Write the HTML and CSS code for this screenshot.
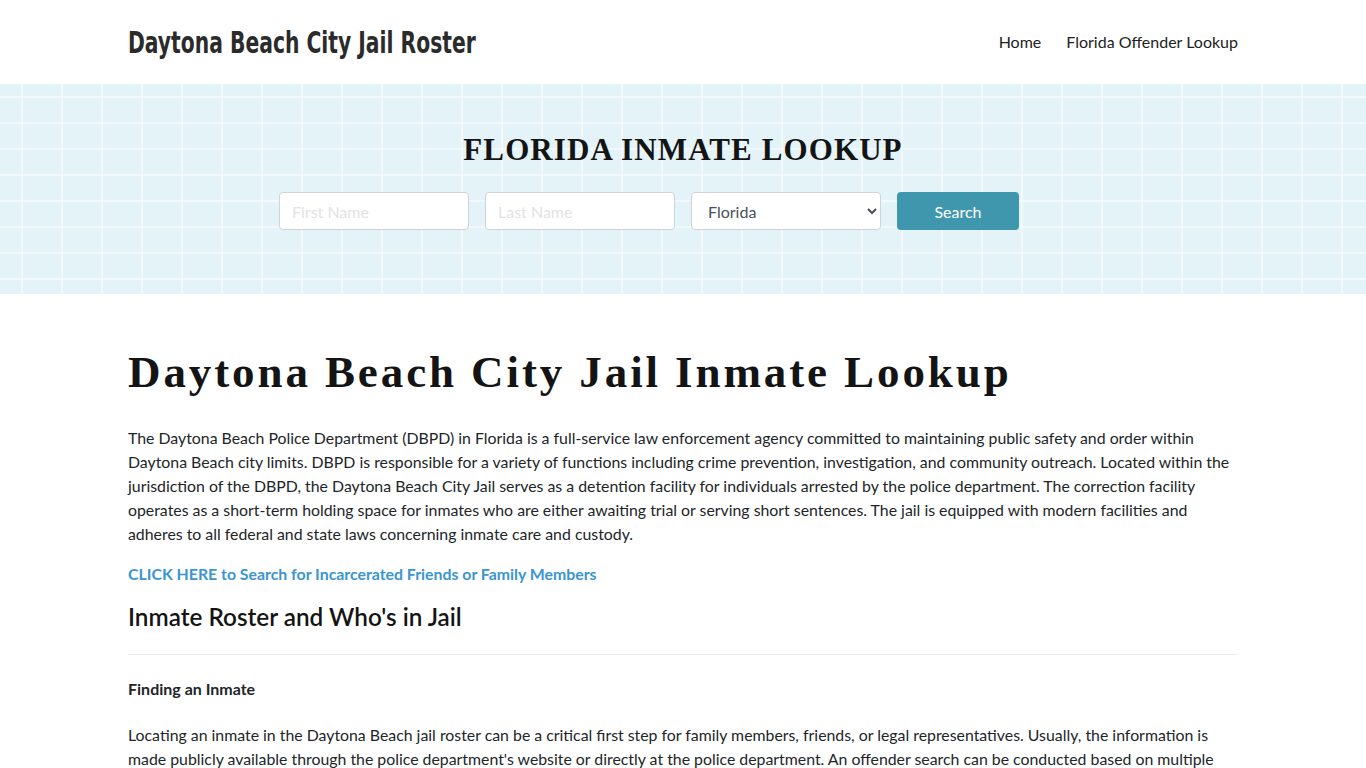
FILE: index.html
```html
<!DOCTYPE html>
<html lang="en">
<head>
<meta charset="utf-8">
<title>Daytona Beach City Jail Roster</title>
<link rel="stylesheet" href="styles.css">
</head>
<body>
<header class="site-header">
  <div class="container header-row">
    <a class="logo" href="#"><span class="logo-text">Daytona Beach City Jail Roster</span></a>
    <nav class="nav">
      <a href="#">Home</a>
      <a href="#">Florida Offender Lookup</a>
    </nav>
  </div>
</header>
<section class="hero">
  <h2 class="hero-title">FLORIDA INMATE LOOKUP</h2>
  <form class="search-form">
    <input class="field" type="text" placeholder="First Name">
    <input class="field" type="text" placeholder="Last Name">
    <select class="field select">
      <option>Florida</option>
    </select>
    <button class="btn" type="button">Search</button>
  </form>
</section>
<main class="container content">
  <h1 class="page-title">Daytona Beach City Jail Inmate Lookup</h1>
  <p>The Daytona Beach Police Department (DBPD) in Florida is a full-service law enforcement agency committed to maintaining public safety and order within Daytona Beach city limits. DBPD is responsible for a variety of functions including crime prevention, investigation, and community outreach. Located within the jurisdiction of the DBPD, the Daytona Beach City Jail serves as a detention facility for individuals arrested by the police department. The correction facility operates as a short-term holding space for inmates who are either awaiting trial or serving short sentences. The jail is equipped with modern facilities and adheres to all federal and state laws concerning inmate care and custody.</p>
  <p><a class="cta" href="#">CLICK HERE to Search for Incarcerated Friends or Family Members</a></p>
  <h2 class="section-title">Inmate Roster and Who's in Jail</h2>
  <hr class="divider">
  <h3 class="sub-title">Finding an Inmate</h3>
  <p>Locating an inmate in the Daytona Beach jail roster can be a critical first step for family members, friends, or legal representatives. Usually, the information is made publicly available through the police department's website or directly at the police department. An offender search can be conducted based on multiple criteria, such as the inmate's name, booking number, or date of arrest.</p>
</main>
</body>
</html>
```
FILE: styles.css
```css
* { box-sizing: border-box; }
html, body { margin: 0; padding: 0; }
body {
  font-family: Lato, "Open Sans", "Liberation Sans", sans-serif;
  font-size: 15.85px;
  line-height: 24px;
  color: #212529;
  background: #fff;
}
.container {
  width: 1110px;
  margin: 0 auto;
}
.site-header { height: 84px; }
.header-row {
  height: 84px;
  display: flex;
  align-items: center;
  justify-content: space-between;
}
.logo {
  display: block;
  width: 348px;
  height: 36px;
  margin-top: 2px;
  text-decoration: none;
  white-space: nowrap;
}
.logo-text {
  display: inline-block;
  font-family: "DejaVu Sans Condensed", "DejaVu Sans", sans-serif;
  font-weight: 700;
  font-size: 29.5px;
  line-height: 36px;
  color: #2b2b2b;
  transform: scaleX(0.765);
  transform-origin: left center;
}
.nav { display: flex; gap: 25px; }
.nav a {
  color: #222;
  text-decoration: none;
  font-size: 16px;
}
.hero {
  height: 210px;
  padding-top: 46px;
  background-color: #e3f3f8;
  background-image:
    repeating-linear-gradient(90deg, transparent 0 21px, rgba(255,255,255,0.5) 21px 23px, transparent 23px 40px),
    repeating-linear-gradient(180deg, transparent 0 12px, rgba(255,255,255,0.5) 12px 14px, transparent 14px 26px);
  text-align: center;
}
.hero-title {
  margin: 0 0 22px;
  font-family: "Liberation Serif", "DejaVu Serif", serif;
  font-weight: 700;
  font-size: 31px;
  line-height: 40px;
  letter-spacing: 1.1px;
  color: #141414;
}
.search-form {
  display: flex;
  justify-content: center;
  gap: 16px;
  padding-right: 68px;
}
.field {
  width: 190px;
  height: 38px;
  border: 1px solid #ced4da;
  border-radius: 4px;
  padding: 6px 12px;
  font-family: Lato, sans-serif;
  font-size: 16px;
  color: #495057;
  background: #fff;
}
.field::placeholder { color: #e3e3e3; }
.btn {
  width: 122px;
  height: 38px;
  border: 0;
  border-radius: 4px;
  background: #3f97ae;
  color: #fff;
  font-family: Lato, sans-serif;
  font-size: 16px;
}
.content { padding-top: 52px; }
.page-title {
  margin: 0 0 27px;
  font-family: "Liberation Serif", "DejaVu Serif", serif;
  font-weight: 700;
  font-size: 45px;
  line-height: 53px;
  letter-spacing: 2.9px;
  color: #141414;
}
.content p { margin: 0 0 16px; }
.cta {
  color: #3a95d2;
  font-weight: 700;
  text-decoration: none;
}
.section-title {
  margin: 0;
  font-size: 24.3px;
  font-weight: 600;
  line-height: 30px;
  color: #141414;
}
.divider {
  margin: 22px 0 22px;
  border: 0;
  border-top: 1px solid #ebebeb;
}
.sub-title {
  margin: 0 0 22px;
  font-size: 16px;
  font-weight: 700;
  line-height: 24px;
}
```
